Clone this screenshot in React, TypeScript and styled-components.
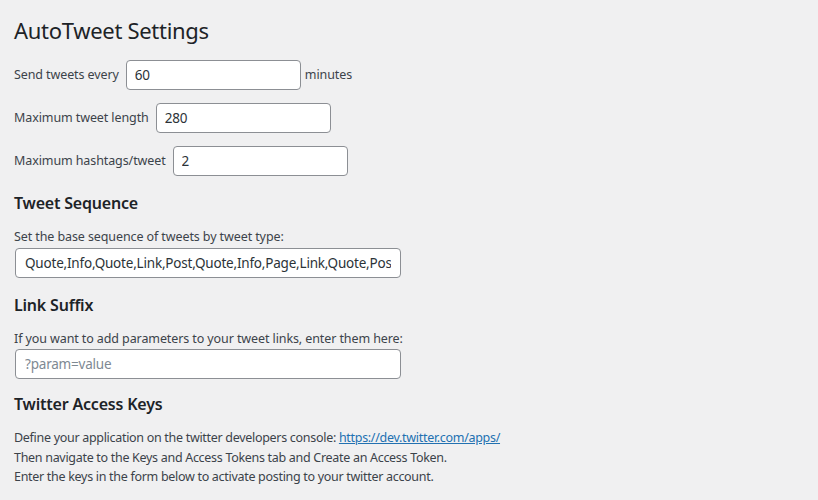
import React from "react";
import styled, { createGlobalStyle } from "styled-components";

const GlobalStyle = createGlobalStyle`
  html, body {
    margin: 0;
    padding: 0;
    background: #f0f0f1;
  }
  body {
    font-family: "Noto Sans", "Open Sans", sans-serif;
    font-size: 12.5px;
    letter-spacing: -0.1px;
    line-height: 19.5px;
    color: #3c434a;
  }
`;

const Wrap = styled.div`
  padding: 15px 20px 0 14px;
  width: 818px;
  height: 500px;
  box-sizing: border-box;
  overflow: hidden;
`;

const Title = styled.h1`
  margin: 0 0 15px;
  font-size: 22px;
  font-weight: 400;
  letter-spacing: -0.3px;
  line-height: 30px;
  color: #1d2327;
`;

const FieldRow = styled.div`
  display: flex;
  align-items: center;
  gap: 4px;
  height: 30px;
  margin-bottom: 13px;
`;

const Label = styled.label`
  white-space: nowrap;
  margin-right: 3px;
`;

const Input = styled.input<{ $wide?: boolean }>`
  box-sizing: border-box;
  width: ${(p) => (p.$wide ? "386px" : "175px")};
  height: 30px;
  margin: 0 0 0 ${(p) => (p.$wide ? "1px" : "0")};
  padding: 0 ${(p) => (p.$wide ? "9px" : "8px")};
  border: 1px solid #8c8f94;
  border-radius: 4px;
  background: #fff;
  color: #2c3338;
  font: inherit;
  font-size: 13.5px;
  letter-spacing: -0.2px;
  outline: none;

  &::placeholder {
    color: #7e8993;
  }
`;

const SectionTitle = styled.h2<{ $tight?: boolean }>`
  margin: ${(p) => (p.$tight ? "14px" : "16px")} 0 13px;
  font-size: 16px;
  font-weight: 600;
  letter-spacing: -0.2px;
  line-height: 22px;
  color: #1d2327;
`;

const Description = styled.p`
  margin: 0 0 1px;
`;

const Paragraph = styled.p`
  margin: 0;
  letter-spacing: -0.3px;
  line-height: 19.7px;
`;

const Link = styled.a`
  color: #2271b1;
  text-decoration: underline;
`;

const numberFields = [
  { label: "Send tweets every", value: "60", suffix: "minutes" },
  { label: "Maximum tweet length", value: "280" },
  { label: "Maximum hashtags/tweet", value: "2" },
];

export default function App() {
  return (
    <Wrap>
      <GlobalStyle />
      <Title>AutoTweet Settings</Title>

      {numberFields.map((f) => (
        <FieldRow key={f.label}>
          <Label>{f.label}</Label>
          <Input defaultValue={f.value} />
          {f.suffix && <span>{f.suffix}</span>}
        </FieldRow>
      ))}

      <SectionTitle>Tweet Sequence</SectionTitle>
      <Description>Set the base sequence of tweets by tweet type:</Description>
      <Input
        $wide
        defaultValue="Quote,Info,Quote,Link,Post,Quote,Info,Page,Link,Quote,Post,Info"
      />

      <SectionTitle>Link Suffix</SectionTitle>
      <Description>
        If you want to add parameters to your tweet links, enter them here:
      </Description>
      <Input $wide placeholder="?param=value" />

      <SectionTitle $tight>Twitter Access Keys</SectionTitle>
      <Paragraph>
        Define your application on the twitter developers console:{" "}
        <Link href="#">https://dev.twitter.com/apps/</Link>
      </Paragraph>
      <Paragraph>
        Then navigate to the Keys and Access Tokens tab and Create an Access
        Token.
      </Paragraph>
      <Paragraph>
        Enter the keys in the form below to activate posting to your twitter
        account.
      </Paragraph>
    </Wrap>
  );
}
